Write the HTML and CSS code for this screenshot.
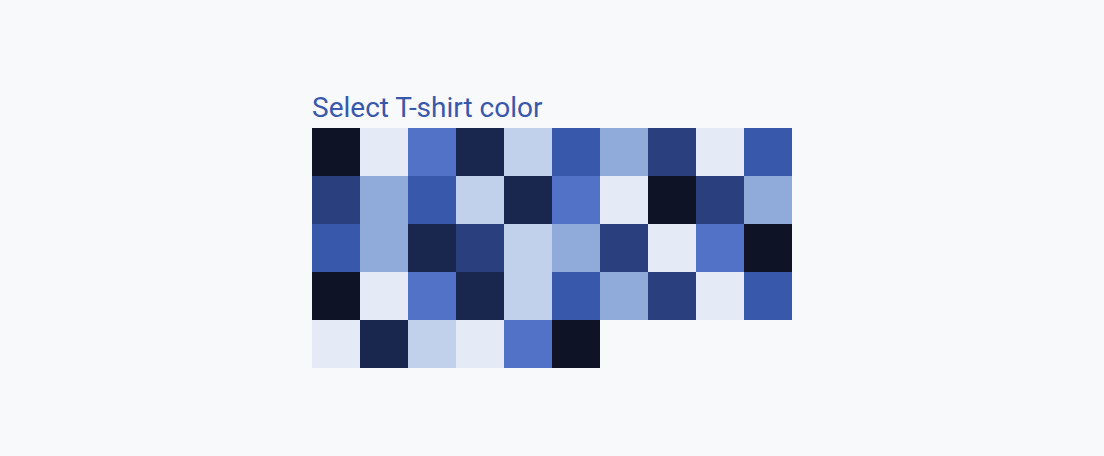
FILE: index.html
```html
<!DOCTYPE html>
<html lang="en">
<head>
    <meta charset="UTF-8" />
    <meta name="viewport" content="width=device-width, initial-scale=1" />
    <title>Select T-shirt color</title>
    <link rel="stylesheet" href="styles.css">
</head>
<body>

<div class="picker">
    <h2 class="picker-title">Select T-shirt color</h2>
    <div class="swatches">
        <!-- row 1 -->
        <div class="swatch c1"></div>
        <div class="swatch c2"></div>
        <div class="swatch c3"></div>
        <div class="swatch c4"></div>
        <div class="swatch c5"></div>
        <div class="swatch c6"></div>
        <div class="swatch c7"></div>
        <div class="swatch c8"></div>
        <div class="swatch c2"></div>
        <div class="swatch c6"></div>
        <!-- row 2 -->
        <div class="swatch c8"></div>
        <div class="swatch c7"></div>
        <div class="swatch c6"></div>
        <div class="swatch c5"></div>
        <div class="swatch c4"></div>
        <div class="swatch c3"></div>
        <div class="swatch c2"></div>
        <div class="swatch c1"></div>
        <div class="swatch c8"></div>
        <div class="swatch c7"></div>
        <!-- row 3 -->
        <div class="swatch c6"></div>
        <div class="swatch c7"></div>
        <div class="swatch c4"></div>
        <div class="swatch c8"></div>
        <div class="swatch c5"></div>
        <div class="swatch c7"></div>
        <div class="swatch c8"></div>
        <div class="swatch c2"></div>
        <div class="swatch c3"></div>
        <div class="swatch c1"></div>
        <!-- row 4 -->
        <div class="swatch c1"></div>
        <div class="swatch c2"></div>
        <div class="swatch c3"></div>
        <div class="swatch c4"></div>
        <div class="swatch c5"></div>
        <div class="swatch c6"></div>
        <div class="swatch c7"></div>
        <div class="swatch c8"></div>
        <div class="swatch c2"></div>
        <div class="swatch c6"></div>
        <!-- row 5 -->
        <div class="swatch c2"></div>
        <div class="swatch c4"></div>
        <div class="swatch c5"></div>
        <div class="swatch c2"></div>
        <div class="swatch c3"></div>
        <div class="swatch c1"></div>
    </div>
</div>

</body>
</html>
```

FILE: styles.css
```css
body {
    font-family: Roboto, 'Liberation Sans', sans-serif;
    background: #f8f9fb;
    margin: 0;
    min-height: 100vh;
    display: flex;
    justify-content: center;
    align-items: flex-start;
}
.picker {
    width: 480px;
    padding-top: 92px;
}
.picker-title {
    margin: 0 0 4px;
    font-size: 28px;
    font-weight: 400;
    line-height: 32px;
    color: #3858ab;
}
.swatches {
    display: grid;
    grid-template-columns: repeat(10, 48px);
    grid-auto-rows: 48px;
}
.c1 { background: #0e1326; }
.c2 { background: #e4eaf6; }
.c3 { background: #5272c8; }
.c4 { background: #19264d; }
.c5 { background: #c1d1eb; }
.c6 { background: #3858ab; }
.c7 { background: #90abda; }
.c8 { background: #2a407e; }
```
